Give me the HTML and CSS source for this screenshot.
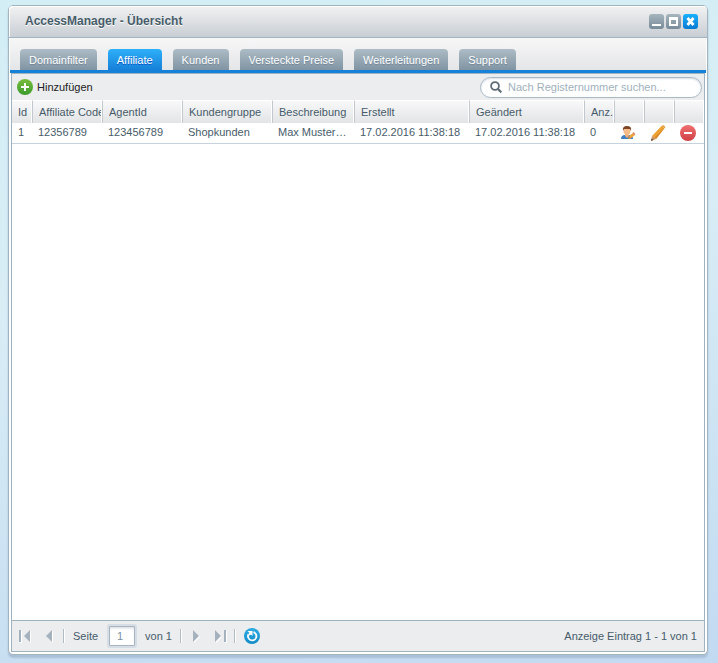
FILE: index.html
```html
<!DOCTYPE html>
<html lang="de">
<head>
<meta charset="utf-8">
<title>AccessManager - Übersicht</title>
<link rel="stylesheet" href="styles.css">
</head>
<body>
<main class="window">
  <header class="titlebar">
    <h1>AccessManager - Übersicht</h1>
    <div class="tools">
      <button class="tool" aria-label="Minimieren"><svg viewBox="0 0 15 15"><path d="M3 10h9v2H3z" fill="#fff"/></svg></button>
      <button class="tool" aria-label="Maximieren"><svg viewBox="0 0 15 15"><path d="M3 3h9v9H3zM5 6v4h5V6z" fill="#fff" fill-rule="evenodd"/></svg></button>
      <button class="tool close" aria-label="Schließen"><svg viewBox="0 0 15 15"><path d="M4.500 4l6 7M10.500 4l-6 7" stroke="#fff" stroke-width="2.800"/></svg></button>
    </div>
  </header>
  <nav class="tabs">
    <button class="tab">Domainfilter</button>
    <button class="tab active">Affiliate</button>
    <button class="tab">Kunden</button>
    <button class="tab">Versteckte Preise</button>
    <button class="tab">Weiterleitungen</button>
    <button class="tab">Support</button>
  </nav>
  <section class="panel">
    <div class="toolbar">
      <button class="add">
        <svg viewBox="0 0 16 16"><defs><linearGradient id="green" x2="0" y2="1"><stop stop-color="#79bd3e"/><stop offset="1" stop-color="#3a9b2c"/></linearGradient></defs><circle cx="8" cy="8" r="8" fill="url(#green)"/><path d="M7 4h2v3h3v2H9v3H7V9H4V7h3z" fill="#fff"/></svg>
        Hinzufügen
      </button>
      <label class="search">
        <svg viewBox="0 0 12 12"><circle cx="5" cy="5" r="3.900" fill="none" stroke="#5c6b75" stroke-width="1.800"/><path d="M7.500 7.500l3.800 3.800" stroke="#5c6b75" stroke-width="2.200"/></svg>
        <input type="text" aria-label="Suche" placeholder="Nach Registernummer suchen...">
      </label>
    </div>
    <div class="grid">
      <table>
        <colgroup><col class="c-id"><col class="c-code"><col class="c-agent"><col class="c-group"><col class="c-desc"><col class="c-date"><col class="c-date"><col class="c-small"><col class="c-small"><col class="c-small"><col></colgroup>
        <thead>
          <tr><th>Id</th><th>Affiliate Code</th><th>AgentId</th><th>Kundengruppe</th><th>Beschreibung</th><th>Erstellt</th><th>Geändert</th><th>Anz.</th><th></th><th></th><th></th></tr>
        </thead>
        <tbody>
          <tr>
            <td>1</td><td>12356789</td><td>123456789</td><td>Shopkunden</td><td>Max Muster…</td><td>17.02.2016 11:38:18</td><td>17.02.2016 11:38:18</td><td>0</td>
            <td class="action"><button aria-label="Benutzer bearbeiten"><svg viewBox="0 0 16 16"><path d="M1 14q0-4 4-4l2 1 2-1q4 0 4 4z" fill="#3e7fc3"/><path d="M5 9h4v2l-2 2-2-2z" fill="#e9ad78"/><ellipse cx="7" cy="6" rx="3.400" ry="4" fill="#f4bd89"/><path d="M3 6Q2 1 7 1t4 5L10 4H4z" fill="#7d4526"/><path d="M8 14l1-3 4-3 2 2-4.500 3.500z" fill="#efa33a"/><path d="M8 14l1-3 2 2z" fill="#c58a5b"/><path d="M12.500 8l1-1 2 2-1 1z" fill="#df806d"/></svg></button></td>
            <td class="action"><button aria-label="Bearbeiten"><svg viewBox="0 0 16 16"><path d="M2 11L11.500 1l3 2L6 14z" fill="#eda233"/><path d="M4.500 12.500L14 3l.5 0L6 14z" fill="#d98624"/><path d="M11.500 1q1.500-1.500 3 0t0 2z" fill="#e59a36"/><path d="M2 11l4 3-5 2z" fill="#c98f5f"/><path d="M1.500 13.500l2 1.500L1 16z" fill="#6b4b40"/></svg></button></td>
            <td class="action"><button aria-label="Löschen"><svg viewBox="0 0 16 16"><defs><linearGradient id="red" x2="0" y2="1"><stop stop-color="#ef7070"/><stop offset="1" stop-color="#cf4146"/></linearGradient></defs><circle cx="8" cy="8" r="8" fill="url(#red)"/><path d="M4 7h8v2H4z" fill="#fff"/></svg></button></td>
          </tr>
        </tbody>
      </table>
    </div>
    <footer class="pager">
      <button class="nav" aria-label="Erste Seite"><svg viewBox="0 0 12 12"><path d="M0 0h2v12H0zM11 0v12L5 6z"/></svg></button>
      <button class="nav" aria-label="Vorherige Seite"><svg viewBox="0 0 12 12"><path d="M9 0v12L3 6z"/></svg></button>
      <span class="sep"></span>
      <label class="page">Seite <input type="text" value="1"></label>
      <span>von 1</span>
      <span class="sep"></span>
      <button class="nav" aria-label="Nächste Seite"><svg viewBox="0 0 12 12"><path d="M3 0v12l6-6z"/></svg></button>
      <button class="nav" aria-label="Letzte Seite"><svg viewBox="0 0 12 12"><path d="M1 0v12l6-6zM10 0h2v12h-2z"/></svg></button>
      <span class="sep"></span>
      <button class="refresh" aria-label="Aktualisieren"><svg viewBox="0 0 16 16"><defs><linearGradient id="blue" x2="0" y2="1"><stop stop-color="#30ace2"/><stop offset="1" stop-color="#128bc8"/></linearGradient></defs><circle cx="8" cy="8" r="8" fill="url(#blue)"/><path d="M4.500 6.200A4.200 4.200 0 1 0 9.500 4.200" fill="none" stroke="#fff" stroke-width="1.800"/><path d="M3.500 3H8.500V8L7 6.500 5.500 7.500 4.500 6 5.500 5z" fill="#fff"/></svg></button>
      <span class="status">Anzeige Eintrag 1 - 1 von 1</span>
    </footer>
  </section>
</main>
</body>
</html>
```
FILE: styles.css
```css
* { box-sizing: border-box; }
body {
  margin: 0;
  min-height: 100vh;
  padding: 5px 10px 8px 8px;
  display: flex;
  background: linear-gradient(170deg, #d3eef5 0%, #d8edf5 40%, #c2daf1 100%);
  font: 11px/14px "Liberation Sans", Arial, sans-serif;
  color: #475c6a;
}
button, input { font: inherit; color: inherit; }
button { border: 0; padding: 0; background: none; }
svg { display: block; }
.window {
  flex: 1;
  min-width: 0;
  display: flex;
  flex-direction: column;
  border: 1px solid #a3b4c1;
  border-radius: 5px;
  background: #fff;
  box-shadow: 0 3px 2px #a9bfd5;
  padding: 0 1px 2px;
}
.titlebar {
  height: 32px;
  margin: 0 -1px;
  padding: 0 9px 1px 16px;
  display: flex;
  align-items: center;
  justify-content: space-between;
  border-bottom: 1px solid #a3b4c1;
  border-radius: 4px 4px 0 0;
  background: linear-gradient(#f2f2f3, #c8ced4);
  box-shadow: inset 1px 1px #fff;
}
h1 { margin: 0; font-size: 12px; line-height: 14px; text-shadow: 0 1px #fff; }
.tools { display: flex; gap: 2px; }
.tool { width: 15px; height: 15px; border-radius: 3px; background: linear-gradient(#a6b5be, #788b99); }
.tool.close { background: linear-gradient(#18b0fc, #087ad2); }
.tool svg { width: 15px; height: 15px; }
.tabs {
  height: 35px;
  padding: 0 10px;
  display: flex;
  align-items: flex-end;
  gap: 11px;
  border-bottom: 3px solid #1681d8;
  background: linear-gradient(#f7f7f8, #e4e5e7);
}
.tab {
  height: 21px;
  padding: 0 9px;
  border-radius: 4px 4px 0 0;
  background: linear-gradient(#adbcc5, #8094a3);
  color: #fff;
  text-shadow: 0 1px #72879a;
}
.tab.active { background: linear-gradient(#2eb0f9, #1680d8); text-shadow: 0 1px #0a55c8; }
.panel {
  flex: 1;
  display: flex;
  flex-direction: column;
  margin: 0 1px;
  border: 1px solid #9eb2bf;
  background: #fff;
}
.toolbar {
  height: 26px;
  padding: 0 2px 0 5px;
  display: flex;
  align-items: center;
  justify-content: space-between;
  background: #ebedef;
}
.add { display: flex; align-items: center; gap: 4px; color: #222; }
.add svg { width: 16px; height: 16px; }
.search {
  width: 222px;
  height: 21px;
  padding: 0 9px;
  display: flex;
  align-items: center;
  gap: 6px;
  border: 1px solid #a9b8c6;
  border-radius: 11px;
  background: #fff;
  box-shadow: inset 0 1px 2px #d5dce4;
}
.search svg { width: 12px; height: 12px; flex: none; }
.search input { flex: 1; min-width: 0; padding: 0; border: 0; outline: 0; background: none; }
.search input::placeholder { color: #a0b0bc; opacity: 1; }
.grid { flex: 1; }
table { width: 100%; table-layout: fixed; border-collapse: separate; border-spacing: 0; }
.c-id { width: 21px; }
.c-code { width: 70px; }
.c-agent { width: 80px; }
.c-group { width: 90px; }
.c-desc { width: 82px; }
.c-date { width: 115px; }
.c-small { width: 30px; }
th, td { text-align: left; font-weight: normal; white-space: nowrap; overflow: hidden; }
th {
  height: 23px;
  padding: 0 1px 0 6px;
  overflow: clip;
  overflow-clip-margin: content-box;
  border-top: 1px solid #fff;
  border-right: 1px solid #c2c8cd;
  background: linear-gradient(#f8f8f9, #e2e4e6);
  box-shadow: inset -1px 0 #fff;
}
th:last-child { border-right: 0; }
td { height: 21px; padding: 0 5px 2px; border-bottom: 1px solid #c6d2de; text-overflow: ellipsis; }
td:first-child { padding-left: 6px; }
td.action { padding: 0 5px; }
.action button { display: block; }
.action svg { width: 16px; height: 16px; }
.pager {
  height: 31px;
  padding: 0 7px;
  display: flex;
  align-items: center;
  gap: 8px;
  border-top: 1px solid #9eb2bf;
  background: #ebedef;
}
.nav svg { width: 12px; height: 12px; fill: #a5b2bd; filter: drop-shadow(1px 1px #fff); }
.nav + .nav { margin-left: 4px; }
.sep { width: 2px; height: 14px; border-left: 1px solid #b0bbc4; background: #fff; }
.page { display: flex; align-items: center; gap: 9px; }
.page input {
  width: 30px;
  height: 24px;
  padding: 0 8px;
  border: 2px solid #d7dde5;
  border-radius: 3px;
  background: #fff;
  box-shadow: inset 0 0 0 1px #a9b5c1, inset 0 2px 3px #cfd6dd;
  color: #7a91a1;
}
.refresh svg { width: 16px; height: 16px; }
.status { margin-left: auto; }
```
